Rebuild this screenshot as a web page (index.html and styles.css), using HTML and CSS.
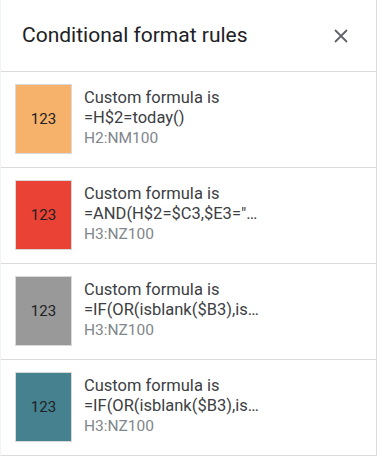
FILE: index.html
```html
<!DOCTYPE html>
<html lang="en">

<head>
    <meta charset="UTF-8">
    <title>Conditional format rules</title>
    <link rel="stylesheet" href="styles.css">
</head>

<body>
    <div class="panel">
        <div class="header">
            <div class="title">Conditional format rules</div>
            <div class="close">
                <svg width="14" height="14" viewBox="0 0 14 14">
                    <path d="M1 1 L13 13 M13 1 L1 13" stroke="#5f6368" stroke-width="1.8" fill="none" />
                </svg>
            </div>
        </div>
        <div class="rule">
            <div class="swatch orange">123</div>
            <div class="info">
                <div class="line">Custom formula is</div>
                <div class="line">=H$2=today()</div>
                <div class="range">H2:NM100</div>
            </div>
        </div>
        <div class="rule">
            <div class="swatch red">123</div>
            <div class="info">
                <div class="line">Custom formula is</div>
                <div class="line">=AND(H$2=$C3,$E3="…</div>
                <div class="range">H3:NZ100</div>
            </div>
        </div>
        <div class="rule">
            <div class="swatch gray">123</div>
            <div class="info">
                <div class="line">Custom formula is</div>
                <div class="line">=IF(OR(isblank($B3),is…</div>
                <div class="range">H3:NZ100</div>
            </div>
        </div>
        <div class="rule">
            <div class="swatch teal">123</div>
            <div class="info">
                <div class="line">Custom formula is</div>
                <div class="line">=IF(OR(isblank($B3),is…</div>
                <div class="range">H3:NZ100</div>
            </div>
        </div>
    </div>
</body>

</html>
```

FILE: styles.css
```css
body {
    margin: 0;
    padding: 0;
    background-color: white;
    font-family: Roboto, "Liberation Sans", sans-serif;
}

.panel {
    width: 375px;
    border-left: 1px solid #f1f3f4;
    border-right: 1px solid #dadce0;
    border-bottom: 1px solid #dadce0;
}

.header {
    display: flex;
    flex-direction: row;
    justify-content: space-between;
    align-items: center;
    height: 71px;
    padding: 0 28px 0 21px;
    box-sizing: border-box;
}

.title {
    font-size: 21px;
    color: #202124;
    padding-bottom: 1px;
}

.close {
    display: flex;
    width: 14px;
    height: 14px;
    padding-top: 1px;
}

.rule {
    display: flex;
    flex-direction: row;
    align-items: center;
    border-top: 1px solid #dadce0;
    padding: 12px 0 13px 14px;
}

.swatch {
    width: 55px;
    height: 68px;
    border: 1px solid #d9d9d9;
    display: flex;
    align-items: center;
    justify-content: center;
    font-size: 15px;
    color: #202124;
}

.orange {
    background-color: #f6b26b;
}

.red {
    background-color: #ea4335;
}

.gray {
    background-color: #999999;
}

.teal {
    background-color: #45818e;
}

.info {
    margin-left: 12px;
    width: 200px;
    padding-bottom: 2px;
}

.line {
    font-size: 16.5px;
    line-height: 20px;
    color: #3c4043;
    white-space: nowrap;
}

.range {
    font-size: 15.5px;
    line-height: 20px;
    color: #80868b;
}
```
